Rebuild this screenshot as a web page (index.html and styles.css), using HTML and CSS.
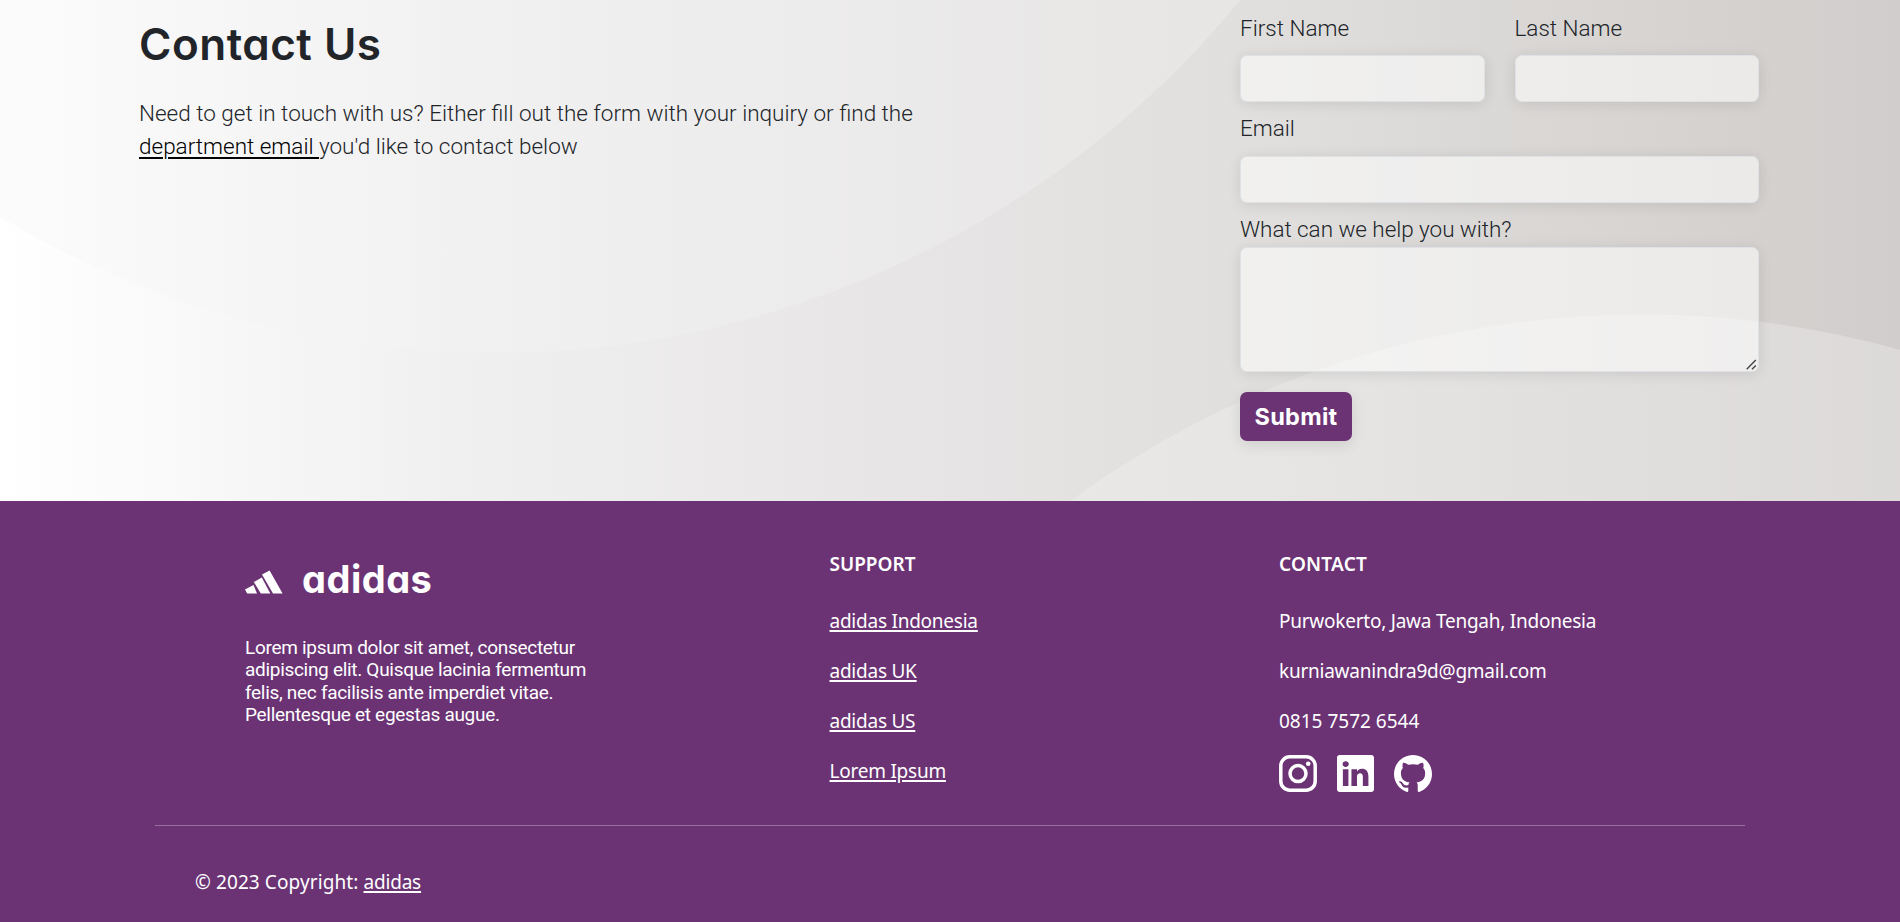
FILE: index.html
```html
<!DOCTYPE html>
<html lang="en">
<head>
<meta charset="utf-8">
<title>adidas - Contact Us</title>
<link rel="stylesheet" href="styles.css">
</head>
<body>
<section class="contact">
  <div class="intro">
    <h1>Contact Us</h1>
    <p>Need to get in touch with us? Either fill out the form with your inquiry or find the <br><a href="#">department email </a>you'd like to contact below</p>
  </div>
  <form class="form">
    <div class="row">
      <div class="field"><label for="fn">First Name</label><input id="fn" type="text"></div>
      <div class="field"><label for="ln">Last Name</label><input id="ln" type="text"></div>
    </div>
    <div class="field email"><label for="em">Email</label><input id="em" type="email"></div>
    <div class="field message"><label for="msg">What can we help you with?</label><textarea id="msg"></textarea>
      <svg class="grip" width="11" height="11" viewBox="0 0 11 11"><path d="M.7 10.3 9.8 1M6 10.3 9.8 6.4" fill="none" stroke="#444" stroke-width="1.4"/></svg>
    </div>
    <button type="button"><span>Submit</span></button>
  </form>
</section>
<footer class="footer">
  <div class="columns">
    <div class="brand">
      <div class="logo">
        <svg width="38" height="24" viewBox="0 0 38 24"><path fill="#fff" d="M0 19.5 8.5 15 12 23.5H2.2zM8.8 12 16.8 7.6 25.3 23.5H15.8zM17 4.6 24.6.4 37.6 23.5H28z"/></svg>
        <span>adidas</span>
      </div>
      <p>Lorem ipsum dolor sit amet, consectetur<br>adipiscing elit. Quisque lacinia fermentum<br>felis, nec facilisis ante imperdiet vitae.<br>Pellentesque et egestas augue.</p>
    </div>
    <div class="support">
      <h2>SUPPORT</h2>
      <p><a href="#">adidas Indonesia</a></p>
      <p><a href="#">adidas UK</a></p>
      <p><a href="#">adidas US</a></p>
      <p><a href="#">Lorem Ipsum</a></p>
    </div>
    <div class="reach">
      <h2>CONTACT</h2>
      <p>Purwokerto, Jawa Tengah, Indonesia</p>
      <p>kurniawanindra9d@gmail.com</p>
      <p class="phone">0815 7572 6544</p>
      <div class="social">
        <svg width="38" height="37" viewBox="0 0 38 37"><rect x="1.8" y="1.8" width="34.4" height="33.4" rx="9" fill="none" stroke="#fff" stroke-width="3.5"/><circle cx="19" cy="18.6" r="8" fill="none" stroke="#fff" stroke-width="3.5"/><circle cx="29.2" cy="8.8" r="2.3" fill="#fff"/></svg>
        <svg width="37" height="37" viewBox="0 0 16 16"><path fill="#fff" d="M0 1.146C0 .513.526 0 1.175 0h13.65C15.474 0 16 .513 16 1.146v13.708c0 .633-.526 1.146-1.175 1.146H1.175C.526 16 0 15.487 0 14.854V1.146zm4.943 12.248V6.169H2.542v7.225h2.401zm-1.2-8.212c.837 0 1.358-.554 1.358-1.248-.015-.709-.52-1.248-1.342-1.248-.822 0-1.359.54-1.359 1.248 0 .694.521 1.248 1.327 1.248h.016zm4.908 8.212V9.359c0-.216.016-.432.08-.586.173-.431.568-.878 1.232-.878.869 0 1.216.662 1.216 1.634v3.865h2.401V9.25c0-2.22-1.184-3.252-2.764-3.252-1.274 0-1.845.7-2.165 1.193v.025h-.016a5.54 5.54 0 0 1 .016-.025V6.169h-2.4c.03.678 0 7.225 0 7.225h2.4z"/></svg>
        <svg width="38" height="37" viewBox="0 0 16 15.6" preserveAspectRatio="none"><path fill="#fff" d="M8 0C3.58 0 0 3.58 0 8c0 3.54 2.29 6.53 5.47 7.59.4.07.55-.17.55-.38 0-.19-.01-.82-.01-1.49-2.01.37-2.53-.49-2.69-.94-.09-.23-.48-.94-.82-1.13-.28-.15-.68-.52-.01-.53.63-.01 1.08.58 1.23.82.72 1.21 1.87.87 2.33.66.07-.52.28-.87.51-1.07-1.78-.2-3.64-.89-3.64-3.95 0-.87.31-1.59.82-2.15-.08-.2-.36-1.02.08-2.12 0 0 .67-.21 2.2.82.64-.18 1.32-.27 2-.27.68 0 1.36.09 2 .27 1.53-1.04 2.2-.82 2.2-.82.44 1.1.16 1.92.08 2.12.51.56.82 1.27.82 2.15 0 3.07-1.87 3.75-3.65 3.95.29.25.54.73.54 1.48 0 1.07-.01 1.93-.01 2.2 0 .21.15.46.55.38A8.01 8.01 0 0 0 16 8c0-4.42-3.58-8-8-8z"/></svg>
      </div>
    </div>
  </div>
  <hr>
  <p class="copy">© 2023 Copyright: <a href="#">adidas</a></p>
</footer>
</body>
</html>
```
FILE: styles.css
```css
* { box-sizing: border-box; }
body { margin: 0; height: 922px; overflow: hidden; font-family: Roboto, sans-serif; color: #212529; background: #6b3374; }
h1, h2, p { margin: 0; }
.contact {
  height: 501px;
  display: flex;
  justify-content: space-between;
  padding: 0 141px 0 139px;
  background:
    radial-gradient(circle at 494px -612px, rgba(244,244,244,.32) 964.5px, transparent 965.5px),
    radial-gradient(circle at 1641px 1280px, rgba(244,244,244,.32) 965px, transparent 966px),
    linear-gradient(90deg, #fff 0, #f1f0f0 450px, #e6e4e4 950px, #e0dfdd 1260px, #d7d4d2 1640px, #d1cdcc 1900px);
}
.intro h1 { margin-top: 11px; font: 600 44px/67px Inter, sans-serif; font-feature-settings: "cv11"; letter-spacing: .5px; }
.intro p { margin-top: 19px; font-size: 22.5px; font-weight: 300; line-height: 33px; white-space: nowrap; }
.intro a { color: #000; text-decoration-thickness: 2px; text-underline-offset: 3px; }
.form { width: 519px; font-weight: 300; font-size: 22.5px; }
.row { display: flex; gap: 30px; }
.row .field { flex: 1; }
.field { display: flex; flex-direction: column; }
label { height: 55px; padding-top: 12px; line-height: 33px; white-space: nowrap; }
.email label { height: 54px; padding-top: 10px; }
.message { position: relative; }
.message label { height: 44px; padding-top: 10px; letter-spacing: -.05px; }
input, textarea {
  display: block; width: 100%; height: 47px; margin: 0;
  border: 1px solid #dee2e6; border-radius: 7px;
  background: rgba(255,255,255,.54);
  box-shadow: 0 2px 14px rgba(0,0,0,.1);
}
textarea { height: 125px; resize: none; }
.grip { position: absolute; right: 2px; bottom: 2px; }
button {
  display: block; width: 112px; height: 49px; margin-top: 20px; padding: 0;
  border: 0; border-radius: 7px; background: #6b3374; color: #fff;
  font: 700 23.5px/49px Inter, sans-serif; letter-spacing: .3px; box-shadow: 0 4px 14px rgba(0,0,0,.1);
}
.footer { height: 421px; color: #fff; font: 400 19px/24px "Noto Sans", sans-serif; }
.footer a { color: inherit; text-decoration-thickness: 2px; text-underline-offset: 2px; }
.columns { display: grid; grid-template-columns: 584.5px 449.5px 1fr; padding-left: 245px; height: 324px; }
.brand { padding-top: 56px; }
.logo { display: flex; align-items: center; gap: 19px; height: 44px; }
.logo svg { margin-top: 5px; }
.logo span { font: 700 38px/44px Inter, sans-serif; font-feature-settings: "cv11"; letter-spacing: .5px; }
.brand p { margin-top: 36px; font: 400 19px/22.4px Roboto, sans-serif; letter-spacing: -.3px; white-space: nowrap; }
h2 { margin-top: 51px; height: 24px; font: 600 19px/24px "Noto Sans", sans-serif; }
.reach h2 { letter-spacing: .2px; }
.support p, .reach p { margin-top: 26px; height: 24px; white-space: nowrap; letter-spacing: -.24px; }
.reach .phone { letter-spacing: 0; }
.footer h2 + p { margin-top: 33px; }
.social { display: flex; gap: 20px; margin-top: 22px; }
hr { height: 1px; margin: 0 155px; border: 0; background: #97709e; }
.copy { margin: 44px 0 0 195px; letter-spacing: .1px; }
.copy a { letter-spacing: -.2px; }
```
